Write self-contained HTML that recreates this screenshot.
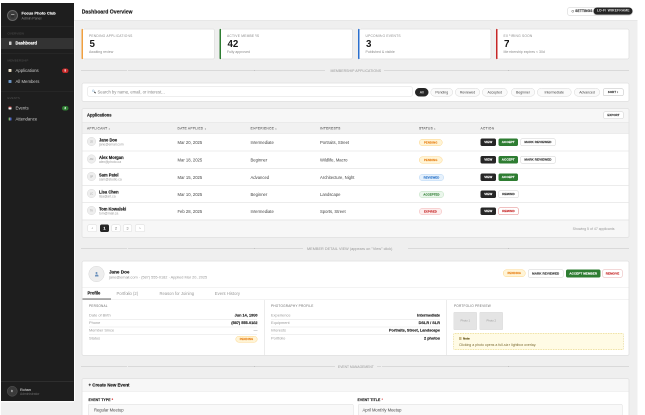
<!DOCTYPE html>
<html><head><meta charset="utf-8">
<style>
*{box-sizing:border-box;margin:0;padding:0}
html,body{width:645px;height:415px;overflow:hidden;background:#fff}
body{font-family:"Liberation Sans",sans-serif;color:#222}
#stage{will-change:transform;position:absolute;left:0;top:0;width:1290px;height:830px;transform:scale(0.5);transform-origin:0 0;overflow:hidden;background:#fff}
.abs{position:absolute}
[style*="font-weight:700"],.nm,.btn,.bdg,.kv .v,#side .badge{-webkit-text-stroke-width:0.3px}
.t{position:absolute;white-space:nowrap;line-height:1}
#appbg{position:absolute;left:2px;top:6px;width:1273px;height:830px;background:#efefef}
#side{position:absolute;left:2px;top:6px;width:146px;height:795.5px;background:#1e1e1e;box-shadow:0 2.5px 0 #fafafa,2px 0 0 #fcfcfc}
#side .div{position:absolute;left:0;width:145px;height:1px;background:#2e2e2e}
#side .lbl{position:absolute;left:13px;font-size:6px;letter-spacing:0.15px;color:#505050;text-transform:uppercase;line-height:1}
#side .nav{position:absolute;left:0;width:145px;height:22px}
#side .nav .ic{position:absolute;left:15px;top:8px;width:6px;height:6px;border-radius:1px}
#side .nav .tx{position:absolute;left:29px;top:7px;font-size:8.6px;color:#cccccc;line-height:1}
#side .badge{position:absolute;left:122px;width:13px;height:9px;border-radius:5px;font-size:5px;color:#fff;text-align:center;line-height:9px;font-weight:700}
#header{position:absolute;left:148px;top:6px;width:1127px;height:35px;background:#fff;border-bottom:1px solid #dedede}
.card{position:absolute;background:#fff;border:1px solid transparent;border-radius:3px}
.card::after{content:"";position:absolute;left:-1px;top:-1px;right:-1px;bottom:-1px;border:2px solid #e4e4e4;border-radius:4px;pointer-events:none}
.stat::after{border-left:none;left:0}
.stat{top:57px;height:62px;width:267px;border-left:3px solid #f0a040}
.stat .l{position:absolute;left:12px;top:10.5px;font-size:6.6px;letter-spacing:0.4px;color:#8a8a8a;line-height:1}
.stat .n{position:absolute;left:13px;top:20px;font-size:19.5px;font-weight:700;color:#1a1a1a;line-height:1}
.stat .s{position:absolute;left:12px;top:42px;font-size:7px;color:#8a8a8a;line-height:1}
.sep{position:absolute;left:163px;width:1096px;height:2px;background:repeating-linear-gradient(90deg,#c2c2c2 0,#c2c2c2 2px,transparent 2px,transparent 4px)}
.sept{position:absolute;font-size:7px;color:#969696;background:#efefef;line-height:1;padding:0 6px;letter-spacing:0.1px}
.pill{position:absolute;top:10px;height:17px;border:1px solid #d6d6d6;border-radius:9px;font-size:7px;color:#444;text-align:center;line-height:15px;background:#fafafa}
.th{position:absolute;top:8px;font-size:6.6px;letter-spacing:0.45px;color:#6a6a6a;line-height:1;-webkit-text-stroke-width:0.15px}
.row{position:absolute;left:0;width:1094px;height:35px;border-top:2px solid #ececec;background:#fff}
.av{position:absolute;left:10px;top:6px;width:18px;height:18px;border-radius:50%;background:#eee;border:1px solid #dcdcdc;font-size:5px;color:#999;text-align:center;line-height:16px}
.nm{position:absolute;left:34px;top:9px;font-size:8.2px;font-weight:700;color:#1a1a1a;line-height:1}
.em{position:absolute;left:34px;top:18px;font-size:6.6px;color:#999;line-height:1}
.cell{position:absolute;top:13px;font-size:8.4px;color:#444;line-height:1}
.bdg{position:absolute;height:14px;border-radius:7px;font-size:5.5px;font-weight:700;text-align:center;line-height:12px;letter-spacing:0.3px;border:1px solid}
.pend{background:#fff4d6;border-color:#fcd68a;color:#e8831a}
.rev{background:#e6f1fc;border-color:#b9d7f5;color:#2a74c9}
.acc{background:#eaf6eb;border-color:#bfe1c1;color:#2e7d32}
.exp{background:#fdeded;border-color:#f3b7b7;color:#c62828}
.btn{position:absolute;height:15px;border-radius:3px;font-size:6px;font-weight:700;text-align:center;line-height:13px;letter-spacing:0.2px;border:1px solid}
.dk{background:#262626;border-color:#262626;color:#fff}
.gr{background:#2e7d32;border-color:#2e7d32;color:#fff}
.wh{background:#fff;border-color:#d0d0d0;color:#333}
.rd{background:#fff;border-color:#e08080;color:#c62828}
.pg{position:absolute;top:8px;height:15px;width:19px;border:1px solid #dadada;border-radius:3px;background:#fff;font-size:7px;color:#555;text-align:center;line-height:13px}
.kv{position:absolute;left:14px;width:337px;height:15px}
.kv .k{position:absolute;left:0;top:4px;font-size:7.8px;color:#9a9a9a;line-height:1}
.kv .v{position:absolute;right:0;top:4px;font-size:7.7px;font-weight:700;color:#222;line-height:1}
.kvd{position:absolute;left:14px;width:336px;height:2px;background:#f0f0f0}
.seclbl{position:absolute;font-size:6.3px;letter-spacing:0.4px;color:#6a6a6a;line-height:1}
</style></head>
<body><div id="stage">
<div id="appbg"></div>

<!-- SIDEBAR -->
<div id="side">
  <div class="abs" style="left:12px;top:14px;width:22px;height:22px;border-radius:50%;background:#3c3c3c;border:2px solid #666"></div>
  <div class="abs" style="left:19.5px;top:22px;width:7px;height:2px;background:#9a9a9a;border-radius:1px"></div><div class="abs" style="left:20px;top:25px;width:6px;height:3.5px;background:#2e2e2e;border-radius:1px"></div>
  <div class="t" style="left:41px;top:17px;font-size:8px;font-weight:700;color:#f2f2f2">Focus Photo Club</div>
  <div class="t" style="left:41px;top:27px;font-size:7px;color:#8a8a8a">Admin Panel</div>
  <div class="div" style="top:46px"></div>
  <div class="lbl" style="top:58px">Overview</div>
  <div class="nav" style="top:70px;background:#333">
    <div class="ic" style="background:#d0d0d0;width:4.5px;left:16px;top:7px;height:7px"></div>
    <div class="tx" style="font-weight:700;color:#fff;font-size:8.2px">Dashboard</div>
  </div>
  <div class="div" style="top:100px"></div>
  <div class="lbl" style="top:112px">Membership</div>
  <div class="nav" style="top:124px">
    <div class="ic" style="background:linear-gradient(160deg,#f4efe6,#d8c8a8)"></div>
    <div class="tx">Applications</div>
  </div>
  <div class="badge" style="top:131px;background:#c62828">5</div>
  <div class="nav" style="top:146px">
    <div class="ic" style="background:#6a94c4"></div>
    <div class="tx">All Members</div>
  </div>
  <div class="div" style="top:177px"></div>
  <div class="lbl" style="top:187px">Events</div>
  <div class="nav" style="top:199px">
    <div class="ic" style="background:#eeeeee;border-top:2px solid #d04848"></div>
    <div class="tx">Events</div>
  </div>
  <div class="badge" style="top:206px;background:#2e7d32">2</div>
  <div class="nav" style="top:221px">
    <div class="ic" style="background:linear-gradient(90deg,#3aa04a 30%,#eeeeee 30%,#e05050 55%,#3a6ad0 60%)"></div>
    <div class="tx">Attendance</div>
  </div>
  <div class="div" style="top:756px;height:2px"></div>
  <div class="abs" style="left:12px;top:766px;width:21px;height:21px;border-radius:50%;background:#3a3a3a;border:1.5px solid #5a5a5a"></div>
  <div class="t" style="left:20px;top:774px;font-size:5px;color:#bbb;font-weight:700">R</div>
  <div class="t" style="left:38px;top:770px;font-size:7.4px;font-weight:400;color:#c4c4c4;-webkit-text-stroke-width:0.2px">Rohan</div>
  <div class="t" style="left:38px;top:779px;font-size:6.6px;color:#6a6a6a">Administrator</div>
</div>

<!-- HEADER -->
<div id="header">
  <div class="t" style="left:15.5px;top:12.5px;font-size:10.2px;font-weight:700;color:#1a1a1a">Dashboard Overview</div>
  <div class="abs" style="left:987px;top:9px;width:58px;height:16px;border:1px solid #cfcfcf;border-radius:3px;background:#fff"></div>
  <div class="abs" style="left:994.5px;top:14px;width:5px;height:5px;border-radius:50%;border:1.2px solid #666"></div><div class="t" style="left:1002.5px;top:13px;font-size:6.3px;font-weight:700;color:#333;letter-spacing:0.4px">SETTINGS</div>
  <div class="abs" style="left:1039px;top:8.5px;width:78px;height:14.5px;border-radius:7px;background:#252525;box-shadow:0 1.5px 2px rgba(0,0,0,.35)"></div>
  <div class="t" style="left:1046px;top:12px;font-size:6.4px;font-weight:400;color:#f4f4f4;letter-spacing:0.55px;-webkit-text-stroke-width:0.15px">LO-FI WIREFRAME</div>
</div>

<!-- STAT CARDS -->
<div class="card stat" style="left:163px"><div class="l">PENDING APPLICATIONS</div><div class="n">5</div><div class="s">Awaiting review</div></div>
<div class="card stat" style="left:439px;border-left-color:#2e7d32"><div class="l">ACTIVE MEMBERS</div><div class="n">42</div><div class="s">Fully approved</div></div>
<div class="card stat" style="left:716px;border-left-color:#2a6fce"><div class="l">UPCOMING EVENTS</div><div class="n">3</div><div class="s">Published &amp; visible</div></div>
<div class="card stat" style="left:992px;border-left-color:#c62828"><div class="l">EXPIRING SOON</div><div class="n">7</div><div class="s">Membership expires &lt; 30d</div></div>

<!-- SEP 1 -->
<div class="sep" style="top:140px"></div>
<div class="sept" style="left:651px;top:138px;padding:0 6px 0 10px">MEMBERSHIP APPLICATIONS</div>

<!-- FILTER BAR -->
<div class="card" style="left:163px;top:165px;width:1096px;height:39px">
  <div class="abs" style="left:11px;top:7px;width:650px;height:20px;border:1px solid #dcdcdc;border-radius:3px;background:#fff"></div>
  <div class="abs" style="left:19.5px;top:12.5px;width:5.5px;height:5.5px;border-radius:50%;border:1px solid #a9c4dc;background:#e6f0f8"></div><div class="abs" style="left:23.5px;top:18px;width:4px;height:1.8px;background:#333;transform:rotate(45deg);border-radius:1px"></div>
  <div class="t" style="left:31px;top:14px;font-size:8.4px;color:#888">Search by name, email, or interest...</div>
  <div class="pill" style="left:666px;width:27px;background:#262626;border-color:#262626;color:#fff">All</div>
  <div class="pill" style="left:697px;width:45px">Pending</div>
  <div class="pill" style="left:746px;width:50px">Reviewed</div>
  <div class="pill" style="left:800px;width:51px">Accepted</div>
  <div class="pill" style="left:858px;width:48px">Beginner</div>
  <div class="pill" style="left:910px;width:69px">Intermediate</div>
  <div class="pill" style="left:984px;width:52px">Advanced</div>
  <div class="abs" style="left:1042px;top:11px;width:41px;height:15px;border:1px solid #bdbdbd;border-radius:3px;background:#fff;font-size:5.5px;font-weight:700;text-align:center;line-height:13px;color:#333;letter-spacing:0.3px">SORT ↕</div>
</div>

<!-- TABLE -->
<div class="card" style="left:163px;top:216px;width:1096px;height:260px">
  <div class="abs" style="left:0;top:0;width:1094px;height:28px;background:#f7f7f7;border-bottom:1.5px solid #e2e2e2;border-radius:3px 3px 0 0"></div>
  <div class="t" style="left:10px;top:10px;font-size:8.2px;font-weight:700;color:#1a1a1a">Applications</div>
  <div class="abs" style="left:1043px;top:6px;width:40px;height:15px;border:1px solid #cfcfcf;border-radius:3px;background:#fff;font-size:5.5px;font-weight:700;text-align:center;line-height:13px;color:#333;letter-spacing:0.3px">EXPORT</div>
  <div class="abs" style="left:0;top:28px;width:1094px;height:22px;background:#f1f1f1"></div>
  <div class="th" style="left:10px;top:36.5px">APPLICANT ↕</div>
  <div class="th" style="left:191px;top:36.5px">DATE APPLIED ↕</div>
  <div class="th" style="left:337px;top:36.5px">EXPERIENCE ↕</div>
  <div class="th" style="left:476px;top:36.5px">INTERESTS</div>
  <div class="th" style="left:674px;top:36.5px">STATUS ↕</div>
  <div class="th" style="left:797px;top:36.5px">ACTION</div>

  <div class="row" style="top:49px">
    <div class="av">JD</div><div class="nm">Jane Doe</div><div class="em">jane@email.com</div>
    <div class="cell" style="left:191px">Mar 20, 2025</div><div class="cell" style="left:337px">Intermediate</div><div class="cell" style="left:476px">Portraits, Street</div>
    <div class="bdg pend" style="left:674px;top:10px;width:47px">PENDING</div>
    <div class="btn dk" style="left:797px;top:9px;width:31px">VIEW</div>
    <div class="btn gr" style="left:833px;top:9px;width:39px">ACCEPT</div>
    <div class="btn wh" style="left:877px;top:9px;width:70px">MARK REVIEWED</div>
  </div>
  <div class="row" style="top:84px">
    <div class="av">AM</div><div class="nm">Alex Morgan</div><div class="em">alex@photo.ca</div>
    <div class="cell" style="left:191px">Mar 18, 2025</div><div class="cell" style="left:337px">Beginner</div><div class="cell" style="left:476px">Wildlife, Macro</div>
    <div class="bdg pend" style="left:674px;top:10px;width:47px">PENDING</div>
    <div class="btn dk" style="left:797px;top:9px;width:31px">VIEW</div>
    <div class="btn gr" style="left:833px;top:9px;width:39px">ACCEPT</div>
    <div class="btn wh" style="left:877px;top:9px;width:70px">MARK REVIEWED</div>
  </div>
  <div class="row" style="top:119px">
    <div class="av">SP</div><div class="nm">Sam Patel</div><div class="em">sam@studio.ca</div>
    <div class="cell" style="left:191px">Mar 15, 2025</div><div class="cell" style="left:337px">Advanced</div><div class="cell" style="left:476px">Architecture, Night</div>
    <div class="bdg rev" style="left:674px;top:10px;width:50px">REVIEWED</div>
    <div class="btn dk" style="left:797px;top:9px;width:31px">VIEW</div>
    <div class="btn gr" style="left:833px;top:9px;width:39px">ACCEPT</div>
  </div>
  <div class="row" style="top:153px">
    <div class="av">LC</div><div class="nm">Lisa Chen</div><div class="em">lisa@art.ca</div>
    <div class="cell" style="left:191px">Mar 10, 2025</div><div class="cell" style="left:337px">Beginner</div><div class="cell" style="left:476px">Landscape</div>
    <div class="bdg acc" style="left:674px;top:10px;width:50px">ACCEPTED</div>
    <div class="btn dk" style="left:797px;top:9px;width:31px">VIEW</div>
    <div class="btn wh" style="left:833px;top:9px;width:40px">REMIND</div>
  </div>
  <div class="row" style="top:187px">
    <div class="av">TK</div><div class="nm">Tom Kowalski</div><div class="em">tom@mail.ca</div>
    <div class="cell" style="left:191px">Feb 28, 2025</div><div class="cell" style="left:337px">Intermediate</div><div class="cell" style="left:476px">Sports, Street</div>
    <div class="bdg exp" style="left:674px;top:10px;width:46px">EXPIRED</div>
    <div class="btn dk" style="left:797px;top:9px;width:31px">VIEW</div>
    <div class="btn rd" style="left:833px;top:9px;width:40px">REMIND</div>
  </div>
  <div class="abs" style="left:0;top:222px;width:1094px;height:36px;background:#f7f7f7;border-top:2px solid #e6e6e6">
    <div class="pg" style="left:11px;width:19px">‹</div>
    <div class="pg" style="left:36px;width:18px;background:#262626;border-color:#262626;color:#fff;font-weight:700">1</div>
    <div class="pg" style="left:59px;width:18px">2</div>
    <div class="pg" style="left:82px;width:18px">3</div>
    <div class="pg" style="left:106px;width:20px">›</div>
    <div class="t" style="right:29px;top:13px;font-size:7px;color:#999">Showing 5 of 47 applicants</div>
  </div>
</div>

<!-- SEP 2 -->
<div class="sep" style="top:496px"></div>
<div class="sept" style="left:607px;top:494px;padding:0 31px 0 7px;font-size:7.5px">MEMBER DETAIL VIEW (appears on "View" click)</div>

<!-- DETAIL CARD -->
<div class="card" style="left:163px;top:521px;width:1096px;height:191px">
  <div class="abs" style="left:13px;top:10px;width:32px;height:32px;border-radius:50%;background:#eeeeee;border:1.5px solid #d8d8d8"></div>
  <div class="abs" style="left:27px;top:22px;width:4px;height:4px;border-radius:50%;background:#6a90bb"></div>
  <div class="abs" style="left:25.5px;top:26.5px;width:7px;height:4px;border-radius:3px 3px 0 0;background:#6a90bb"></div>
  <div class="t" style="left:54px;top:18px;font-size:9.2px;font-weight:700;color:#1a1a1a">Jane Doe</div>
  <div class="t" style="left:54px;top:29px;font-size:7.7px;color:#999">jane@email.com · (587) 555-0182 · Applied Mar 20, 2025</div>
  <div class="bdg pend" style="left:842px;top:17px;width:45px;height:15px;line-height:13px">PENDING</div>
  <div class="btn wh" style="left:892px;top:17px;width:71px;height:16px;line-height:14px">MARK REVIEWED</div>
  <div class="btn gr" style="left:968px;top:17px;width:69px;height:16px;line-height:14px">ACCEPT MEMBER</div>
  <div class="btn rd" style="left:1041px;top:17px;width:40px;height:16px;line-height:14px;border-color:#e6b0b0">REMOVE</div>
  <div class="abs" style="left:0;top:52px;width:1094px;height:1px;background:#e6e6e6"></div>
  <div class="t" style="left:11px;top:61px;font-size:8.2px;font-weight:700;color:#1a1a1a">Profile</div>
  <div class="t" style="left:69px;top:61px;font-size:8.4px;color:#999">Portfolio (2)</div>
  <div class="t" style="left:155px;top:61px;font-size:8.3px;color:#999">Reason for Joining</div>
  <div class="t" style="left:265.5px;top:61px;font-size:8.5px;color:#999">Event History</div>
  <div class="abs" style="left:0;top:74.5px;width:58px;height:3px;background:#666"></div>
  <div class="abs" style="left:0;top:77px;width:1094px;height:1px;background:#e6e6e6"></div>
  <div class="abs" style="left:364px;top:78px;width:2px;height:112px;background:#ececec"></div>
  <div class="abs" style="left:728px;top:78px;width:2px;height:112px;background:#ececec"></div>
  <!-- col1 -->
  <div class="seclbl" style="left:14px;top:87px">PERSONAL</div>
  <div class="kv" style="top:101px"><div class="k">Date of Birth</div><div class="v">Jun 14, 1990</div></div>
  <div class="kvd" style="top:116px"></div>
  <div class="kv" style="top:115.5px"><div class="k">Phone</div><div class="v">(587) 555-0182</div></div>
  <div class="kvd" style="top:130.5px"></div>
  <div class="kv" style="top:131px"><div class="k">Member Since</div><div class="v" style="font-weight:400;color:#aaa">—</div></div>
  <div class="kvd" style="top:145.5px"></div>
  <div class="kv" style="top:146.5px"><div class="k">Status</div></div>
  <div class="bdg pend" style="left:307px;top:150px;width:44px;height:13px;line-height:11px">PENDING</div>
  <!-- col2 -->
  <div class="seclbl" style="left:378px;top:87px">PHOTOGRAPHY PROFILE</div>
  <div class="kv" style="width:338px;left:378px;top:101px"><div class="k">Experience</div><div class="v">Intermediate</div></div>
  <div class="kvd" style="width:338px;left:378px;top:116px"></div>
  <div class="kv" style="width:338px;left:378px;top:115.5px"><div class="k">Equipment</div><div class="v">DSLR / SLR</div></div>
  <div class="kvd" style="width:338px;left:378px;top:130.5px"></div>
  <div class="kv" style="width:338px;left:378px;top:131px"><div class="k">Interests</div><div class="v">Portraits, Street, Landscape</div></div>
  <div class="kvd" style="width:338px;left:378px;top:145.5px"></div>
  <div class="kv" style="width:338px;left:378px;top:146.5px"><div class="k">Portfolio</div><div class="v">2 photos</div></div>
  <!-- col3 -->
  <div class="seclbl" style="left:744px;top:87px">PORTFOLIO PREVIEW</div>
  <div class="abs" style="left:743px;top:102px;width:47px;height:36px;background:#e4e4e4;border:1px solid #dedede;border-radius:2px;font-size:5.5px;color:#999;text-align:center;line-height:33px">Photo 1</div>
  <div class="abs" style="left:795px;top:102px;width:47px;height:36px;background:#e4e4e4;border:1px solid #dedede;border-radius:2px;font-size:5.5px;color:#999;text-align:center;line-height:33px">Photo 2</div>
  <div class="abs" style="left:743px;top:144px;width:340px;height:34px;background:#fffbe5;border:1.5px dashed #e0cb6a;border-radius:3px"></div>
  <div class="abs" style="left:754px;top:152px;width:5px;height:6px;background:#c9b98a"></div>
  <div class="t" style="left:762px;top:152px;font-size:6px;font-weight:700;color:#6a5a20">Note</div>
  <div class="t" style="left:754px;top:164px;font-size:7px;color:#7a6a30">Clicking a photo opens a full-size lightbox overlay.</div>
</div>

<!-- SEP 3 -->
<div class="sep" style="top:732px"></div>
<div class="sept" style="left:670px;top:731px;font-size:6.5px">EVENT MANAGEMENT</div>

<!-- EVENT CARD -->
<div class="card" style="left:163px;top:756px;width:1096px;height:120px">
  <div class="abs" style="left:0;top:0;width:1094px;height:26px;background:#f7f7f7;border-bottom:1px solid #e2e2e2"></div>
  <div class="t" style="left:13px;top:9px;font-size:8.8px;font-weight:700;color:#1a1a1a">+ Create New Event</div>
  <div class="t" style="left:13px;top:40px;font-size:6.8px;font-weight:700;color:#222;letter-spacing:0.2px">EVENT TYPE <span style="color:#d32f2f">*</span></div>
  <div class="abs" style="left:12px;top:51px;width:531px;height:24px;border:1px solid #dcdcdc;border-radius:3px;background:#f9f9f9"></div>
  <div class="t" style="left:24px;top:59px;font-size:8.3px;color:#444">Regular Meetup</div>
  <div class="t" style="left:551px;top:40px;font-size:6.8px;font-weight:700;color:#222;letter-spacing:0.2px">EVENT TITLE <span style="color:#d32f2f">*</span></div>
  <div class="abs" style="left:552px;top:51px;width:529px;height:24px;border:1px solid #dcdcdc;border-radius:3px;background:#f9f9f9"></div>
  <div class="t" style="left:561px;top:59px;font-size:8.3px;color:#444">April Monthly Meetup</div>
</div>

</div></body></html>
